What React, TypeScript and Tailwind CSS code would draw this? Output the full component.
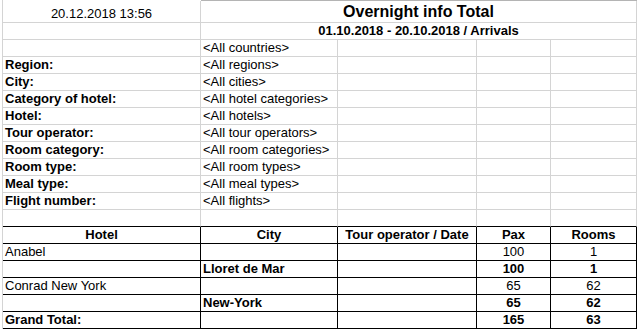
import React from "react";

type CellProps = {
  children?: React.ReactNode;
  b?: boolean;
  c?: boolean;
  dark?: boolean;
  darkBottom?: boolean;
  span4?: boolean;
  tall?: boolean;
  big?: boolean;
};

function Cell({ children, b, c, dark, darkBottom, span4, tall, big }: CellProps) {
  const cls = [
    "flex items-end whitespace-nowrap border-r border-b",
    dark ? "border-r-black border-b-black" : darkBottom ? "border-r-[#d4d4d4] border-b-black" : "border-r-[#d4d4d4] border-b-[#d4d4d4]",
    tall ? "h-[22px]" : "h-[17px]",
    c ? "justify-center" : "justify-start pl-[2px]",
    b ? "font-bold" : "",
    span4 ? "col-span-4" : "",
    big ? "text-[16px] leading-5" : "",
  ].join(" ");
  return <div className={cls}>{children}</div>;
}

const filters: [string, string][] = [
  ["", "<All countries>"],
  ["Region:", "<All regions>"],
  ["City:", "<All cities>"],
  ["Category of hotel:", "<All hotel categories>"],
  ["Hotel:", "<All hotels>"],
  ["Tour operator:", "<All tour operators>"],
  ["Room category:", "<All room categories>"],
  ["Room type:", "<All room types>"],
  ["Meal type:", "<All meal types>"],
  ["Flight number:", "<All flights>"],
  ["", ""],
];

const rows: { hotel: string; city: string; pax: string; rooms: string; bold: boolean }[] = [
  { hotel: "Anabel", city: "", pax: "100", rooms: "1", bold: false },
  { hotel: "", city: "Lloret de Mar", pax: "100", rooms: "1", bold: true },
  { hotel: "Conrad New York", city: "", pax: "65", rooms: "62", bold: false },
  { hotel: "", city: "New-York", pax: "65", rooms: "62", bold: true },
];

export default function App() {
  const grid = "grid grid-cols-[198px_137px_139px_74px_86px]";
  return (
    <div className="w-[639px] h-[331px] overflow-hidden bg-white text-black font-['Liberation_Sans',Arial,sans-serif] text-[13px] leading-4">
      <div className="ml-[2px] w-[635px] border-l border-l-[#d4d4d4]">
        <div className={grid}>
          <div className="h-px" />
          <div className="col-span-4 h-px bg-[#b4b4b4]" />
        </div>
        <div className={grid}>
          <Cell tall c>20.12.2018 13:56</Cell>
          <Cell tall c b span4 big>Overnight info Total</Cell>
          <Cell />
          <Cell c b span4>01.10.2018 - 20.10.2018 / Arrivals</Cell>
          {filters.map(([label, value], i) => {
            const last = i === filters.length - 1;
            return (
              <React.Fragment key={i}>
                <Cell b darkBottom={last}>{label}</Cell>
                <Cell darkBottom={last}>{value}</Cell>
                <Cell darkBottom={last} />
                <Cell darkBottom={last} />
                <Cell darkBottom={last} />
              </React.Fragment>
            );
          })}
          <Cell dark c b>Hotel</Cell>
          <Cell dark c b>City</Cell>
          <Cell dark c b>Tour operator / Date</Cell>
          <Cell dark c b>Pax</Cell>
          <Cell dark c b>Rooms</Cell>
          {rows.map((r, i) => (
            <React.Fragment key={i}>
              <Cell dark>{r.hotel}</Cell>
              <Cell dark b>{r.city}</Cell>
              <Cell dark />
              <Cell dark c b={r.bold}>{r.pax}</Cell>
              <Cell dark c b={r.bold}>{r.rooms}</Cell>
            </React.Fragment>
          ))}
          <Cell dark b>Grand Total:</Cell>
          <Cell dark />
          <Cell dark />
          <Cell dark c b>165</Cell>
          <Cell dark c b>63</Cell>
        </div>
      </div>
    </div>
  );
}
